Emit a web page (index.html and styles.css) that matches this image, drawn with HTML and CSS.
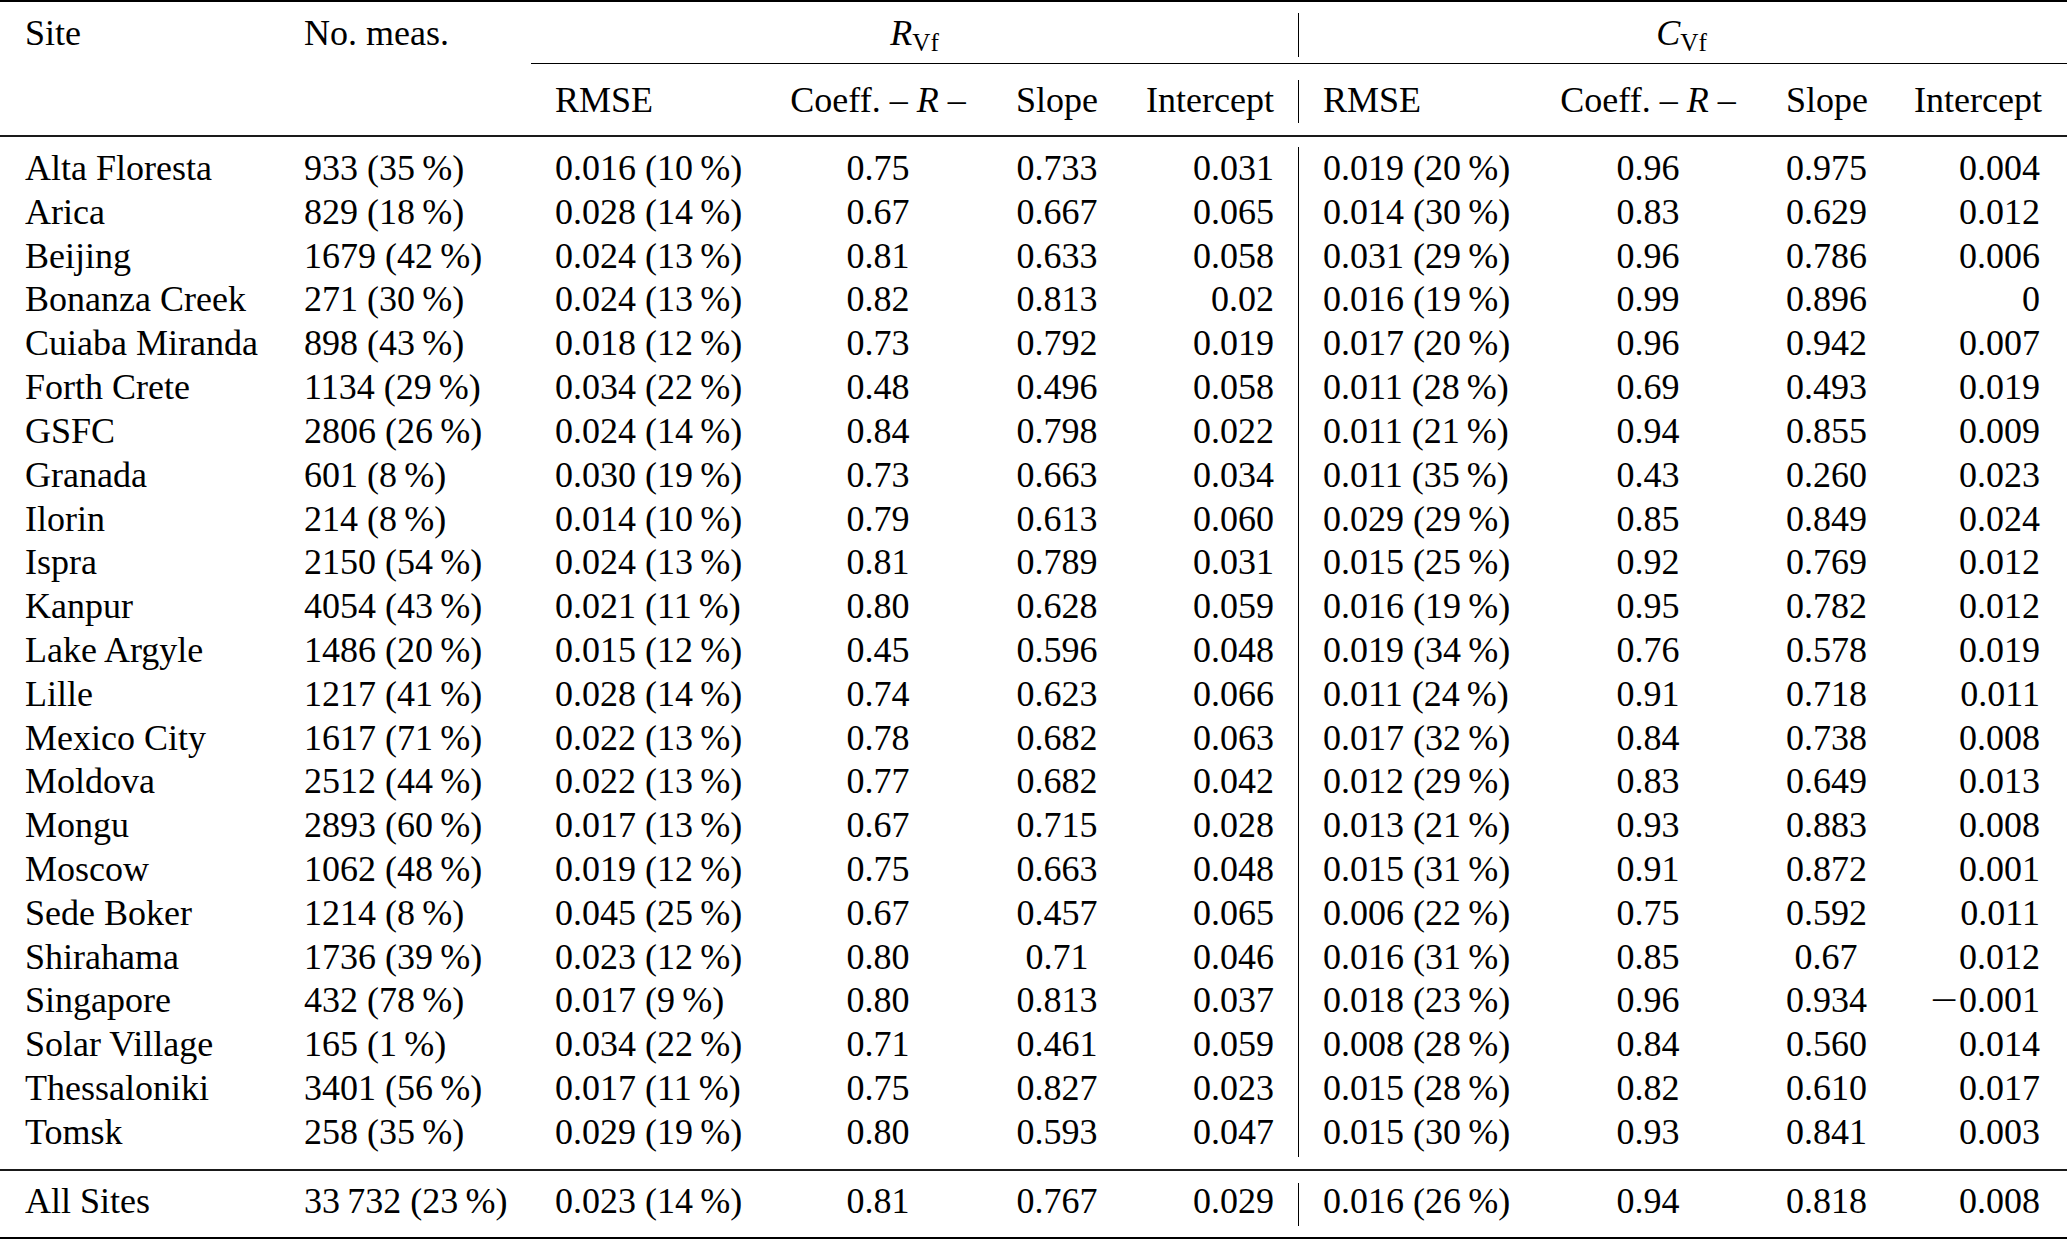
FILE: index.html
```html
<!DOCTYPE html>
<html lang="en">
<head>
<meta charset="utf-8">
<title>Table</title>
<link rel="stylesheet" href="styles.css">
</head>
<body>
<table class="results">
<colgroup>
<col class="w1"><col class="w2"><col class="w3"><col class="w4"><col class="w5">
<col class="w6"><col class="w7"><col class="w8"><col class="w9"><col class="w10">
</colgroup>
<tbody>
<tr class="sp"><td colspan="10" class="toprule sp13"></td></tr>
<tr class="hd1">
<th class="l first">Site</th><th class="l">No. meas.</th>
<th colspan="4" class="c"><i>R</i><sub>Vf</sub></th>
<th colspan="4" class="c vl last"><i>C</i><sub>Vf</sub></th>
</tr>
<tr class="sp"><td colspan="10" class="sp6"></td></tr>
<tr class="sp"><td colspan="2" class="sp17"></td><td colspan="8" class="cmid sp17"></td></tr>
<tr class="hd2">
<th class="first"></th><th></th>
<th class="l">RMSE</th><th class="c">Coeff. – <i>R</i> –</th><th class="c">Slope</th><th class="r">Intercept</th>
<th class="l vl">RMSE</th><th class="c">Coeff. – <i>R</i> –</th><th class="c">Slope</th><th class="r last">Intercept</th>
</tr>
<tr class="sp"><td colspan="10" class="sp12"></td></tr>
<tr class="sp"><td colspan="10" class="midrule sp12"></td></tr>
<tr><td class="l first">Alta Floresta</td><td class="l">933 (35&thinsp;%)</td><td class="l">0.016 (10&thinsp;%)</td><td class="c">0.75</td><td class="c">0.733</td><td class="r">0.031</td><td class="l vl">0.019 (20&thinsp;%)</td><td class="c">0.96</td><td class="c">0.975</td><td class="r last">0.004</td></tr>
<tr><td class="l first">Arica</td><td class="l">829 (18&thinsp;%)</td><td class="l">0.028 (14&thinsp;%)</td><td class="c">0.67</td><td class="c">0.667</td><td class="r">0.065</td><td class="l vl">0.014 (30&thinsp;%)</td><td class="c">0.83</td><td class="c">0.629</td><td class="r last">0.012</td></tr>
<tr><td class="l first">Beijing</td><td class="l">1679 (42&thinsp;%)</td><td class="l">0.024 (13&thinsp;%)</td><td class="c">0.81</td><td class="c">0.633</td><td class="r">0.058</td><td class="l vl">0.031 (29&thinsp;%)</td><td class="c">0.96</td><td class="c">0.786</td><td class="r last">0.006</td></tr>
<tr><td class="l first">Bonanza Creek</td><td class="l">271 (30&thinsp;%)</td><td class="l">0.024 (13&thinsp;%)</td><td class="c">0.82</td><td class="c">0.813</td><td class="r">0.02</td><td class="l vl">0.016 (19&thinsp;%)</td><td class="c">0.99</td><td class="c">0.896</td><td class="r last">0</td></tr>
<tr><td class="l first">Cuiaba Miranda</td><td class="l">898 (43&thinsp;%)</td><td class="l">0.018 (12&thinsp;%)</td><td class="c">0.73</td><td class="c">0.792</td><td class="r">0.019</td><td class="l vl">0.017 (20&thinsp;%)</td><td class="c">0.96</td><td class="c">0.942</td><td class="r last">0.007</td></tr>
<tr><td class="l first">Forth Crete</td><td class="l">1134 (29&thinsp;%)</td><td class="l">0.034 (22&thinsp;%)</td><td class="c">0.48</td><td class="c">0.496</td><td class="r">0.058</td><td class="l vl">0.011 (28&thinsp;%)</td><td class="c">0.69</td><td class="c">0.493</td><td class="r last">0.019</td></tr>
<tr><td class="l first">GSFC</td><td class="l">2806 (26&thinsp;%)</td><td class="l">0.024 (14&thinsp;%)</td><td class="c">0.84</td><td class="c">0.798</td><td class="r">0.022</td><td class="l vl">0.011 (21&thinsp;%)</td><td class="c">0.94</td><td class="c">0.855</td><td class="r last">0.009</td></tr>
<tr><td class="l first">Granada</td><td class="l">601 (8&thinsp;%)</td><td class="l">0.030 (19&thinsp;%)</td><td class="c">0.73</td><td class="c">0.663</td><td class="r">0.034</td><td class="l vl">0.011 (35&thinsp;%)</td><td class="c">0.43</td><td class="c">0.260</td><td class="r last">0.023</td></tr>
<tr><td class="l first">Ilorin</td><td class="l">214 (8&thinsp;%)</td><td class="l">0.014 (10&thinsp;%)</td><td class="c">0.79</td><td class="c">0.613</td><td class="r">0.060</td><td class="l vl">0.029 (29&thinsp;%)</td><td class="c">0.85</td><td class="c">0.849</td><td class="r last">0.024</td></tr>
<tr><td class="l first">Ispra</td><td class="l">2150 (54&thinsp;%)</td><td class="l">0.024 (13&thinsp;%)</td><td class="c">0.81</td><td class="c">0.789</td><td class="r">0.031</td><td class="l vl">0.015 (25&thinsp;%)</td><td class="c">0.92</td><td class="c">0.769</td><td class="r last">0.012</td></tr>
<tr><td class="l first">Kanpur</td><td class="l">4054 (43&thinsp;%)</td><td class="l">0.021 (11&thinsp;%)</td><td class="c">0.80</td><td class="c">0.628</td><td class="r">0.059</td><td class="l vl">0.016 (19&thinsp;%)</td><td class="c">0.95</td><td class="c">0.782</td><td class="r last">0.012</td></tr>
<tr><td class="l first">Lake Argyle</td><td class="l">1486 (20&thinsp;%)</td><td class="l">0.015 (12&thinsp;%)</td><td class="c">0.45</td><td class="c">0.596</td><td class="r">0.048</td><td class="l vl">0.019 (34&thinsp;%)</td><td class="c">0.76</td><td class="c">0.578</td><td class="r last">0.019</td></tr>
<tr><td class="l first">Lille</td><td class="l">1217 (41&thinsp;%)</td><td class="l">0.028 (14&thinsp;%)</td><td class="c">0.74</td><td class="c">0.623</td><td class="r">0.066</td><td class="l vl">0.011 (24&thinsp;%)</td><td class="c">0.91</td><td class="c">0.718</td><td class="r last">0.011</td></tr>
<tr><td class="l first">Mexico City</td><td class="l">1617 (71&thinsp;%)</td><td class="l">0.022 (13&thinsp;%)</td><td class="c">0.78</td><td class="c">0.682</td><td class="r">0.063</td><td class="l vl">0.017 (32&thinsp;%)</td><td class="c">0.84</td><td class="c">0.738</td><td class="r last">0.008</td></tr>
<tr><td class="l first">Moldova</td><td class="l">2512 (44&thinsp;%)</td><td class="l">0.022 (13&thinsp;%)</td><td class="c">0.77</td><td class="c">0.682</td><td class="r">0.042</td><td class="l vl">0.012 (29&thinsp;%)</td><td class="c">0.83</td><td class="c">0.649</td><td class="r last">0.013</td></tr>
<tr><td class="l first">Mongu</td><td class="l">2893 (60&thinsp;%)</td><td class="l">0.017 (13&thinsp;%)</td><td class="c">0.67</td><td class="c">0.715</td><td class="r">0.028</td><td class="l vl">0.013 (21&thinsp;%)</td><td class="c">0.93</td><td class="c">0.883</td><td class="r last">0.008</td></tr>
<tr><td class="l first">Moscow</td><td class="l">1062 (48&thinsp;%)</td><td class="l">0.019 (12&thinsp;%)</td><td class="c">0.75</td><td class="c">0.663</td><td class="r">0.048</td><td class="l vl">0.015 (31&thinsp;%)</td><td class="c">0.91</td><td class="c">0.872</td><td class="r last">0.001</td></tr>
<tr><td class="l first">Sede Boker</td><td class="l">1214 (8&thinsp;%)</td><td class="l">0.045 (25&thinsp;%)</td><td class="c">0.67</td><td class="c">0.457</td><td class="r">0.065</td><td class="l vl">0.006 (22&thinsp;%)</td><td class="c">0.75</td><td class="c">0.592</td><td class="r last">0.011</td></tr>
<tr><td class="l first">Shirahama</td><td class="l">1736 (39&thinsp;%)</td><td class="l">0.023 (12&thinsp;%)</td><td class="c">0.80</td><td class="c">0.71</td><td class="r">0.046</td><td class="l vl">0.016 (31&thinsp;%)</td><td class="c">0.85</td><td class="c">0.67</td><td class="r last">0.012</td></tr>
<tr><td class="l first">Singapore</td><td class="l">432 (78&thinsp;%)</td><td class="l">0.017 (9&thinsp;%)</td><td class="c">0.80</td><td class="c">0.813</td><td class="r">0.037</td><td class="l vl">0.018 (23&thinsp;%)</td><td class="c">0.96</td><td class="c">0.934</td><td class="r last"><span class="minus">&minus;</span>0.001</td></tr>
<tr><td class="l first">Solar Village</td><td class="l">165 (1&thinsp;%)</td><td class="l">0.034 (22&thinsp;%)</td><td class="c">0.71</td><td class="c">0.461</td><td class="r">0.059</td><td class="l vl">0.008 (28&thinsp;%)</td><td class="c">0.84</td><td class="c">0.560</td><td class="r last">0.014</td></tr>
<tr><td class="l first">Thessaloniki</td><td class="l">3401 (56&thinsp;%)</td><td class="l">0.017 (11&thinsp;%)</td><td class="c">0.75</td><td class="c">0.827</td><td class="r">0.023</td><td class="l vl">0.015 (28&thinsp;%)</td><td class="c">0.82</td><td class="c">0.610</td><td class="r last">0.017</td></tr>
<tr class="lastrow"><td class="l first">Tomsk</td><td class="l">258 (35&thinsp;%)</td><td class="l">0.029 (19&thinsp;%)</td><td class="c">0.80</td><td class="c">0.593</td><td class="r">0.047</td><td class="l vl">0.015 (30&thinsp;%)</td><td class="c">0.93</td><td class="c">0.841</td><td class="r last">0.003</td></tr>
<tr class="sp"><td colspan="10" class="sp12"></td></tr>
<tr class="sp"><td colspan="10" class="midrule sp14"></td></tr>
<tr class="total"><td class="l first">All Sites</td><td class="l">33&thinsp;732 (23&thinsp;%)</td><td class="l">0.023 (14&thinsp;%)</td><td class="c">0.81</td><td class="c">0.767</td><td class="r">0.029</td><td class="l vl">0.016 (26&thinsp;%)</td><td class="c">0.94</td><td class="c">0.818</td><td class="r last">0.008</td></tr>
<tr class="sp"><td colspan="10" class="sp11"></td></tr>
<tr class="sp"><td colspan="10" class="toprule sp3"></td></tr>
</tbody>
</table>
</body>
</html>
```

FILE: styles.css
```css
html, body {
  margin: 0;
  padding: 0;
  background: #ffffff;
}

body {
  font-family: "Liberation Serif", "Times New Roman", serif;
  font-size: 36px;
  color: #000000;
}

.results {
  width: 2067px;
  table-layout: fixed;
  border-collapse: separate;
  border-spacing: 0;
}

.w1 { width: 280px; }
.w2 { width: 251px; }
.w3 { width: 233px; }
.w4 { width: 228px; }
.w5 { width: 130px; }
.w6 { width: 176px; }
.w7 { width: 236px; }
.w8 { width: 228px; }
.w9 { width: 128px; }
.w10 { width: 177px; }

.results th,
.results td {
  box-sizing: border-box;
  padding: 0 24px;
  font-weight: normal;
  white-space: nowrap;
  line-height: 43.82px;
  vertical-align: top;
}

.results .first { padding-left: 25px; }
.results .last { padding-right: 27px; }

.l { text-align: left; }
.c { text-align: center; }
.r { text-align: right; }

.results .vl { border-left: 1px solid #000000; }

.results i { font-style: italic; }

.results sub {
  font-size: 0.7em;
  line-height: 0;
  vertical-align: -0.22em;
}

.minus {
  display: inline-block;
  width: 0.72em;
  text-align: center;
  transform: scaleX(1.35);
  margin-right: 0.06em;
}

.hd1 th {
  line-height: 41px;
  padding-bottom: 3px;
}

.hd2 th {
  line-height: 40px;
  padding-bottom: 3px;
}

.lastrow td { padding-bottom: 2px; }

.total td {
  line-height: 36px;
  padding-bottom: 7px;
}

.results .sp td {
  padding: 0;
  line-height: 0;
  font-size: 0;
}

.results .sp3 { height: 3px; }
.results .sp6 { height: 6px; }
.results .sp11 { height: 11px; }
.results .sp12 { height: 12px; }
.results .sp13 { height: 13px; }
.results .sp14 { height: 14px; }
.results .sp17 { height: 17px; }

.toprule { border-top: 2px solid #000000; }
.midrule { border-top: 2px solid #1a1a1a; }
.cmid { border-top: 1px solid #000000; }
```
